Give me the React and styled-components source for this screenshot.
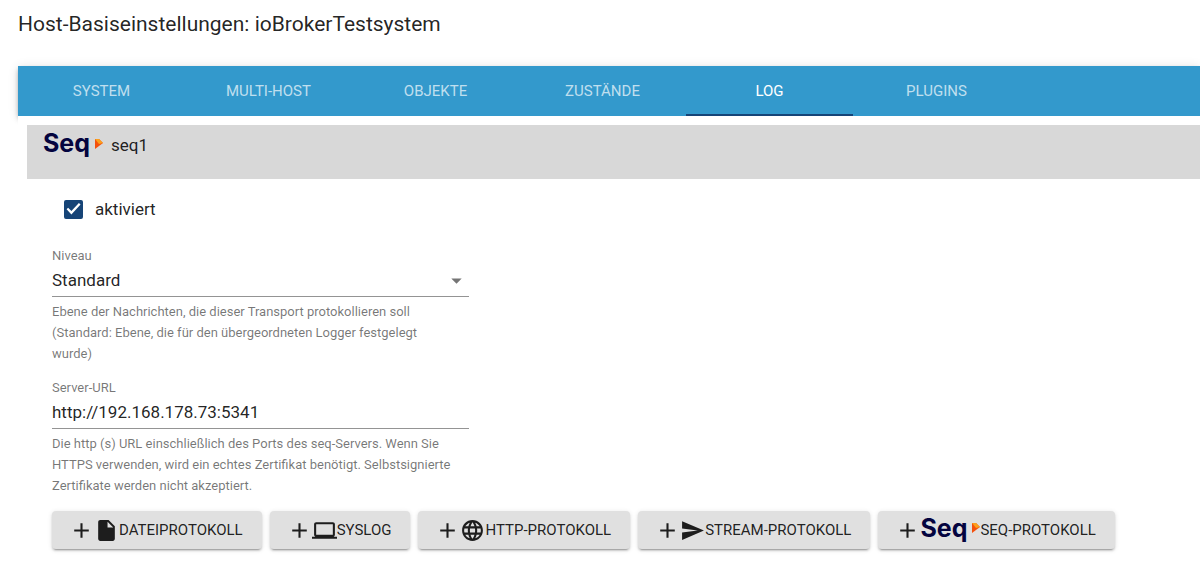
import React, { useState } from "react";
import styled, { createGlobalStyle } from "styled-components";

const GlobalStyle = createGlobalStyle`
  *, *::before, *::after { box-sizing: border-box; }
  body {
    margin: 0;
    background: #fff;
    color: rgba(0, 0, 0, 0.87);
    font-family: Roboto, "Liberation Sans", sans-serif;
    font-size: 17px;
    overflow-x: hidden;
  }
`;

const Page = styled.main`
  padding: 9px 0 24px 18px;
`;

const Title = styled.h1`
  margin: 0 0 27px;
  font-size: 21px;
  line-height: 30px;
  font-weight: 400;
`;

const TabBar = styled.div`
  display: flex;
  height: 50px;
  background: #3399cc;
  box-shadow: 0 2px 4px -1px rgba(0, 0, 0, 0.2), 0 4px 5px rgba(0, 0, 0, 0.14),
    0 1px 10px rgba(0, 0, 0, 0.12);
`;

const Tab = styled.button`
  width: 167px;
  padding: 2px 12px 0;
  border: 0;
  border-bottom: 2px solid ${(p) => (p.$active ? "#164477" : "transparent")};
  background: none;
  color: ${(p) => (p.$active ? "#fff" : "rgba(255, 255, 255, 0.7)")};
  font: 400 15px Roboto, sans-serif;
  text-transform: uppercase;
  cursor: pointer;
`;

const TabPanel = styled.section`
  position: relative;
  padding: 9px 0 0 9px;
  background: #fff;
`;

const LoggerHeader = styled.header`
  display: flex;
  align-items: center;
  gap: 8px;
  padding: 4px 16px 17px;
  background: #d8d8d8;
  line-height: 33px;
`;

const LogoBox = styled.span`
  display: inline-flex;
  align-items: center;
  justify-content: space-between;
  width: 60px;
  height: 33px;
  padding-bottom: 4px;
  color: #04043f;
  font: 700 25px/29px Inter, sans-serif;
  text-transform: none;
`;

const Body = styled.div`
  padding: 0 25px;
`;

const CheckRow = styled.label`
  display: flex;
  align-items: center;
  gap: 12px;
  width: max-content;
  height: 60px;
  margin: 0 0 8px 12px;
  cursor: pointer;
`;

const CheckInput = styled.input`
  appearance: none;
  width: 19px;
  height: 19px;
  margin: 0;
  border: 2px solid #757575;
  border-radius: 2px;
  display: grid;
  place-items: center;
  &:checked {
    border-color: #164477;
    background: #164477;
  }
  &:checked::before {
    content: "";
    width: 15px;
    height: 12px;
    background: #fff;
    clip-path: polygon(4% 52%, 14% 39%, 36% 67%, 86% 0, 97% 13%, 36% 96%);
  }
`;

const Field = styled.div`
  display: flex;
  flex-direction: column;
  max-width: 417px;
  margin-bottom: 15px;
`;

const FieldLabel = styled.label`
  color: rgba(0, 0, 0, 0.54);
  font-size: 13px;
  line-height: 17px;
`;

const control = `
  width: 100%;
  height: 33px;
  padding: 0;
  border: 0;
  border-radius: 0;
  border-bottom: 1px solid #949494;
  background: none;
  color: rgba(0, 0, 0, 0.87);
  font: 400 17px Roboto, sans-serif;
  outline: none;
`;

const TextInput = styled.input`${control}`;

const SelectWrap = styled.div`
  display: grid;
  align-items: center;
  & > * { grid-area: 1 / 1; }
  & > svg { justify-self: end; pointer-events: none; }
`;

const Select = styled.select`
  ${control}
  appearance: none;
`;

const HelpText = styled.p`
  margin: 4px 0 0;
  padding-right: 12px;
  color: rgba(0, 0, 0, 0.54);
  font-size: 13px;
  line-height: 21px;
`;

const Actions = styled.div`
  display: flex;
  flex-wrap: wrap;
  gap: 8px;
`;

const AddButton = styled.button`
  display: inline-flex;
  align-items: center;
  height: 38px;
  padding: 0 19px 0 17px;
  border: 0;
  border-radius: 4px;
  background: #e0e0e0;
  color: rgba(0, 0, 0, 0.87);
  box-shadow: 0 3px 1px -2px rgba(0, 0, 0, 0.2), 0 2px 2px rgba(0, 0, 0, 0.14),
    0 1px 5px rgba(0, 0, 0, 0.12);
  font: 400 15px Roboto, sans-serif;
  text-transform: uppercase;
  white-space: nowrap;
  cursor: pointer;
`;

const PATHS = {
  add: "M19 13h-6v6h-2v-6H5v-2h6V5h2v6h6v2z",
  file: "M6 2c-1.1 0-1.99.9-1.99 2L4 20c0 1.1.89 2 1.99 2H18c1.1 0 2-.9 2-2V8l-6-6H6zm7 7V3.5L18.5 9H13z",
  computer:
    "M20 18c1.1 0 1.99-.9 1.99-2L22 6c0-1.1-.9-2-2-2H4c-1.1 0-2 .9-2 2v10c0 1.1.9 2 2 2H0v2h24v-2h-4zM4 6h16v10H4V6z",
  globe:
    "M11.99 2C6.47 2 2 6.48 2 12s4.47 10 9.99 10C17.52 22 22 17.52 22 12S17.52 2 11.99 2zm6.93 6h-2.95c-.32-1.25-.78-2.45-1.38-3.56 1.84.63 3.37 1.91 4.33 3.56zM12 4.04c.83 1.2 1.48 2.53 1.91 3.96h-3.82c.43-1.43 1.08-2.76 1.91-3.96zM4.26 14C4.1 13.36 4 12.69 4 12s.1-1.36.26-2h3.38c-.08.66-.14 1.32-.14 2 0 .68.06 1.34.14 2H4.26zm.82 2h2.95c.32 1.25.78 2.45 1.38 3.56-1.84-.63-3.37-1.9-4.33-3.56zm2.95-8H5.08c.96-1.66 2.49-2.93 4.33-3.56C8.81 5.55 8.35 6.75 8.03 8zM12 19.96c-.83-1.2-1.48-2.53-1.91-3.96h3.82c-.43 1.43-1.08 2.76-1.91 3.96zM14.34 14H9.66c-.09-.66-.16-1.32-.16-2 0-.68.07-1.35.16-2h4.68c.09.65.16 1.32.16 2 0 .68-.07 1.34-.16 2zm.25 5.56c.6-1.11 1.06-2.31 1.38-3.56h2.95c-.96 1.65-2.49 2.93-4.33 3.56zM16.36 14c.08-.66.14-1.32.14-2 0-.68-.06-1.34-.14-2h3.38c.16.64.26 1.31.26 2s-.1 1.36-.26 2h-3.38z",
  send: "M2.01 21L23 12 2.01 3 2 10l15 2-15 2z",
  dropdown: "M7 10l5 5 5-5z",
};

function Icon({ name, color = "currentColor" }) {
  return (
    <svg width="25" height="25" viewBox="0 0 24 24" fill={color} aria-hidden="true">
      <path d={PATHS[name]} />
    </svg>
  );
}

function SeqLogo() {
  return (
    <LogoBox>
      Seq
      <svg width="8" height="10" viewBox="0 0 8 10" aria-hidden="true">
        <path d="M0 0h4l4 4-8 6z" fill="#f4500c" />
        <path d="M0 0h4l4 4-4 1z" fill="#fba01c" />
      </svg>
    </LogoBox>
  );
}

const TABS = ["System", "Multi-Host", "Objekte", "Zustände", "Log", "Plugins"];

const LOGGERS = [
  { label: "Dateiprotokoll", icon: "file" },
  { label: "Syslog", icon: "computer" },
  { label: "HTTP-Protokoll", icon: "globe" },
  { label: "Stream-Protokoll", icon: "send" },
  { label: "Seq-Protokoll" },
];

export default function App() {
  const [tab, setTab] = useState("Log");
  const [enabled, setEnabled] = useState(true);
  const [url, setUrl] = useState("http://192.168.178.73:5341");

  return (
    <>
      <GlobalStyle />
      <Page>
        <Title>Host-Basiseinstellungen: ioBrokerTestsystem</Title>
        <TabBar role="tablist">
          {TABS.map((name) => (
            <Tab
              key={name}
              role="tab"
              aria-selected={tab === name}
              $active={tab === name}
              onClick={() => setTab(name)}
            >
              {name}
            </Tab>
          ))}
        </TabBar>
        <TabPanel>
          <LoggerHeader>
            <SeqLogo />
            <span>seq1</span>
          </LoggerHeader>
          <Body>
            <CheckRow>
              <CheckInput
                type="checkbox"
                checked={enabled}
                onChange={(e) => setEnabled(e.target.checked)}
              />
              aktiviert
            </CheckRow>
            <Field>
              <FieldLabel htmlFor="level">Niveau</FieldLabel>
              <SelectWrap>
                <Select id="level" aria-describedby="level-help">
                  <option>Standard</option>
                </Select>
                <Icon name="dropdown" color="#757575" />
              </SelectWrap>
              <HelpText id="level-help">
                Ebene der Nachrichten, die dieser Transport protokollieren soll (Standard: Ebene,
                die für den übergeordneten Logger festgelegt wurde)
              </HelpText>
            </Field>
            <Field>
              <FieldLabel htmlFor="url">Server-URL</FieldLabel>
              <TextInput
                id="url"
                value={url}
                onChange={(e) => setUrl(e.target.value)}
                aria-describedby="url-help"
              />
              <HelpText id="url-help">
                Die http (s) URL einschließlich des Ports des seq-Servers. Wenn Sie HTTPS
                verwenden, wird ein echtes Zertifikat benötigt. Selbstsignierte Zertifikate werden
                nicht akzeptiert.
              </HelpText>
            </Field>
            <Actions>
              {LOGGERS.map(({ label, icon }) => (
                <AddButton key={label} type="button">
                  <Icon name="add" />
                  {icon ? <Icon name={icon} /> : <SeqLogo />}
                  {label}
                </AddButton>
              ))}
            </Actions>
          </Body>
        </TabPanel>
      </Page>
    </>
  );
}
